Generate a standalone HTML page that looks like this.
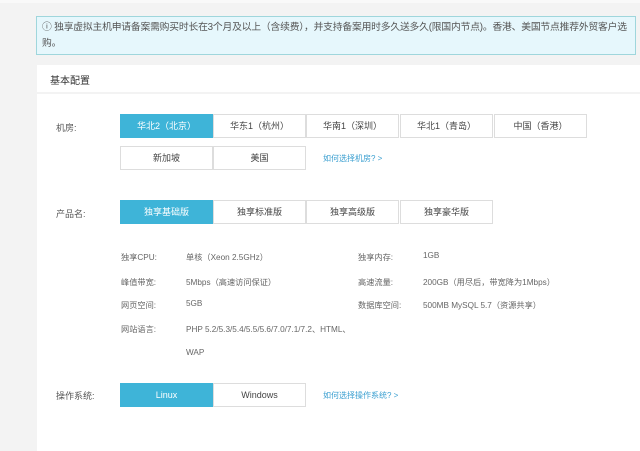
<!DOCTYPE html>
<html><head><meta charset="utf-8"><style>
body{margin:0;width:640px;height:451px;background:#f3f3f3;font-family:"Liberation Sans","Noto Sans CJK SC",sans-serif;color:#555;font-size:8.5px;position:relative;overflow:hidden}
.a{position:absolute}
.notice{left:36px;top:16px;width:600px;height:39px;background:#e6f7fc;border:1px solid #9fd6dc;box-sizing:border-box;padding:3px 5px;line-height:16px;color:#555;font-size:9.8px;letter-spacing:-0.2px}
.hdr{left:37px;top:65px;width:603px;height:27px;background:#fff}
.hdr span{position:absolute;left:13px;top:7px;font-size:10px;color:#333}
.panel{left:37px;top:94px;width:603px;height:357px;background:#fff}
.btn{position:absolute;height:24px;width:93px;border:1px solid #ddd;box-sizing:border-box;text-align:center;line-height:22px;font-size:9px;color:#444;background:#fff}
.on{background:#3eb4d8;border-color:#3eb4d8;color:#fff}
.lbl{position:absolute;font-size:9px;color:#555}
.s{position:absolute;font-size:8.2px;color:#666}
.lnk{position:absolute;font-size:8px;color:#3a9fd0}
</style></head><body>
<div class="a" style="left:0;top:0;width:640px;height:3px;background:#f9f9f9"></div>
<div class="a notice">ⓘ 独享虚拟主机申请备案需购买时长在3个月及以上（含续费），并支持备案用时多久送多久(限国内节点)。香港、美国节点推荐外贸客户选购。</div>
<div class="a hdr"><span>基本配置</span></div>
<div class="a panel"></div>
<div class="lbl" style="left:56px;top:121px">机房:</div>
<div class="btn on" style="left:120px;top:114px">华北2（北京）</div>
<div class="btn" style="left:213px;top:114px">华东1（杭州）</div>
<div class="btn" style="left:306px;top:114px">华南1（深圳）</div>
<div class="btn" style="left:400px;top:114px">华北1（青岛）</div>
<div class="btn" style="left:494px;top:114px">中国（香港）</div>
<div class="btn" style="left:120px;top:146px">新加坡</div>
<div class="btn" style="left:213px;top:146px">美国</div>
<div class="lnk" style="left:323px;top:153px">如何选择机房? &gt;</div>
<div class="lbl" style="left:56px;top:207px">产品名:</div>
<div class="btn on" style="left:120px;top:200px">独享基础版</div>
<div class="btn" style="left:213px;top:200px">独享标准版</div>
<div class="btn" style="left:306px;top:200px">独享高级版</div>
<div class="btn" style="left:400px;top:200px">独享豪华版</div>
<div class="s" style="left:121px;top:251px">独享CPU:</div><div class="s" style="left:186px;top:251px">单核（Xeon 2.5GHz）</div>
<div class="s" style="left:358px;top:251px">独享内存:</div><div class="s" style="left:423px;top:251px">1GB</div>
<div class="s" style="left:121px;top:276px">峰值带宽:</div><div class="s" style="left:186px;top:276px">5Mbps（高速访问保证）</div>
<div class="s" style="left:358px;top:276px">高速流量:</div><div class="s" style="left:423px;top:276px">200GB（用尽后，带宽降为1Mbps）</div>
<div class="s" style="left:121px;top:299px">网页空间:</div><div class="s" style="left:186px;top:299px">5GB</div>
<div class="s" style="left:358px;top:299px">数据库空间:</div><div class="s" style="left:423px;top:299px">500MB MySQL 5.7（资源共享）</div>
<div class="s" style="left:121px;top:323px">网站语言:</div><div class="s" style="left:186px;top:323px">PHP 5.2/5.3/5.4/5.5/5.6/7.0/7.1/7.2、HTML、</div>
<div class="s" style="left:186px;top:348px">WAP</div>
<div class="lbl" style="left:56px;top:389px">操作系统:</div>
<div class="btn on" style="left:120px;top:383px">Linux</div>
<div class="btn" style="left:213px;top:383px">Windows</div>
<div class="lnk" style="left:323px;top:390px">如何选择操作系统? &gt;</div>
</body></html>
